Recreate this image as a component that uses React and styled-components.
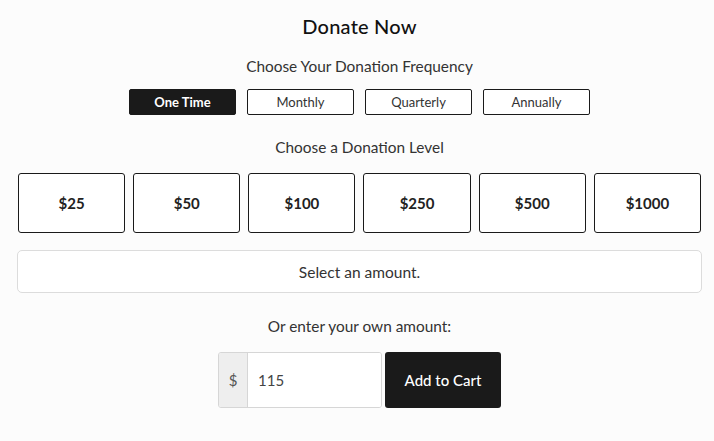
import React, { useState } from "react";
import styled, { createGlobalStyle } from "styled-components";

const GlobalStyle = createGlobalStyle`
  html, body {
    margin: 0;
    padding: 0;
    background: #fcfcfc;
    font-family: Lato, "Open Sans", sans-serif;
    color: #222;
  }
`;

const Page = styled.div`
  width: 683px;
  margin: 0 0 0 18px;
  padding-top: 14px;
  display: flex;
  flex-direction: column;
  align-items: center;
`;

const Title = styled.h2`
  margin: 0;
  font-family: Lato, sans-serif;
  font-weight: 500;
  font-size: 20px;
  line-height: 24px;
  color: #111;
  letter-spacing: 0.2px;
`;

const Label = styled.div`
  font-size: 15.4px;
  line-height: 18px;
  color: #333;
  margin-top: ${(p) => p.$top}px;
`;

const FreqRow = styled.div`
  display: flex;
  gap: 11px;
  margin-top: 14px;
`;

const FreqButton = styled.button`
  width: 107px;
  height: 26px;
  padding: 0;
  border: 1px solid #1a1a1a;
  border-radius: 2px;
  background: ${(p) => (p.$active ? "#1a1a1a" : "#fff")};
  color: ${(p) => (p.$active ? "#fff" : "#333")};
  font-family: Lato, sans-serif;
  font-size: 13px;
  font-weight: ${(p) => (p.$active ? 700 : 400)};
  cursor: pointer;
`;

const AmountGrid = styled.div`
  display: grid;
  grid-template-columns: repeat(6, 1fr);
  gap: 8px;
  width: 100%;
  margin-top: 17px;
`;

const AmountButton = styled.button`
  height: 60px;
  padding: 0;
  border: 1px solid #1a1a1a;
  border-radius: 3px;
  background: #fff;
  color: #222;
  font-family: Lato, sans-serif;
  font-weight: 700;
  font-size: 15px;
  cursor: pointer;
`;

const Notice = styled.div`
  box-sizing: border-box;
  width: calc(100% + 2px);
  height: 43px;
  margin-top: 17px;
  border: 1px solid #dcdcdc;
  border-radius: 5px;
  background: #fff;
  display: flex;
  align-items: center;
  justify-content: center;
  font-size: 15.5px;
  color: #333;
`;

const EntryRow = styled.div`
  display: flex;
  gap: 3px;
  margin-top: 17px;
`;

const InputGroup = styled.div`
  display: flex;
  height: 54px;
  border: 1px solid #d6d6d6;
  border-radius: 3px;
  overflow: hidden;
`;

const Addon = styled.span`
  width: 28px;
  display: flex;
  align-items: center;
  justify-content: center;
  background: #eeeeee;
  border-right: 1px solid #d6d6d6;
  color: #555;
  font-size: 15px;
`;

const AmountInput = styled.input`
  width: 123px;
  border: none;
  outline: none;
  padding: 0 0 0 10px;
  background: #fff;
  font-family: Lato, sans-serif;
  font-size: 15px;
  color: #444;
`;

const CartButton = styled.button`
  width: 116px;
  height: 56px;
  border: none;
  border-radius: 3px;
  background: #1a1a1a;
  color: #fff;
  font-family: Lato, sans-serif;
  font-size: 15px;
  font-weight: 500;
  cursor: pointer;
`;

const frequencies = ["One Time", "Monthly", "Quarterly", "Annually"];
const amounts = ["$25", "$50", "$100", "$250", "$500", "$1000"];

export default function App() {
  const [freq, setFreq] = useState("One Time");
  const [value, setValue] = useState("115");

  return (
    <>
      <GlobalStyle />
      <Page>
        <Title>Donate Now</Title>
        <Label $top={19}>Choose Your Donation Frequency</Label>
        <FreqRow>
          {frequencies.map((f) => (
            <FreqButton key={f} $active={f === freq} onClick={() => setFreq(f)}>
              {f}
            </FreqButton>
          ))}
        </FreqRow>
        <Label $top={23}>Choose a Donation Level</Label>
        <AmountGrid>
          {amounts.map((a) => (
            <AmountButton key={a}>{a}</AmountButton>
          ))}
        </AmountGrid>
        <Notice>Select an amount.</Notice>
        <Label $top={24}>Or enter your own amount:</Label>
        <EntryRow>
          <InputGroup>
            <Addon>$</Addon>
            <AmountInput value={value} onChange={(e) => setValue(e.target.value)} />
          </InputGroup>
          <CartButton>Add to Cart</CartButton>
        </EntryRow>
      </Page>
    </>
  );
}
